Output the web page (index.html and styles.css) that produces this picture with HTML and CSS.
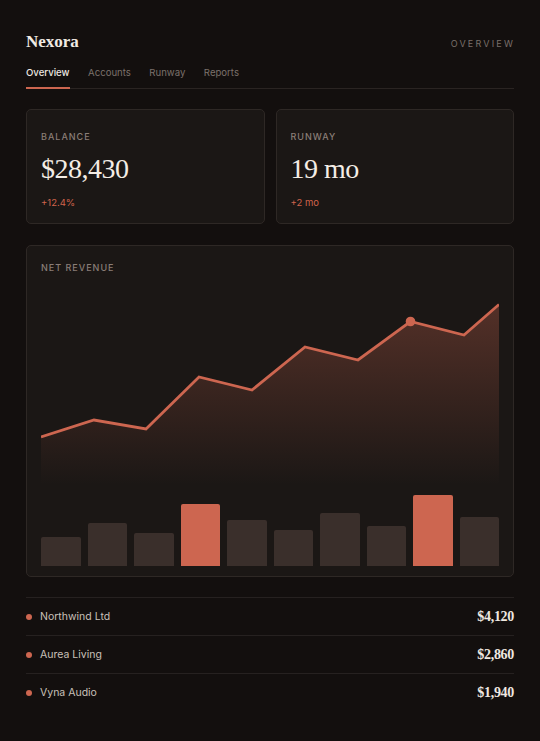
FILE: index.html
```html
<!DOCTYPE html>
<html lang="en">
<head>
    <meta charset="UTF-8">
    <meta name="viewport" content="width=device-width, initial-scale=1.0">
    <title>Nexora</title>
    <link rel="stylesheet" href="styles.css">
</head>
<body>
<div class="page">
    <header class="top">
        <div class="brand">Nexora</div>
        <div class="section-name">OVERVIEW</div>
    </header>

    <nav class="tabs">
        <a class="tab active">Overview</a>
        <a class="tab">Accounts</a>
        <a class="tab">Runway</a>
        <a class="tab">Reports</a>
    </nav>

    <div class="stats">
        <div class="card stat">
            <div class="label">BALANCE</div>
            <div class="value">$28,430</div>
            <div class="delta">+12.4%</div>
        </div>
        <div class="card stat">
            <div class="label">RUNWAY</div>
            <div class="value">19 mo</div>
            <div class="delta">+2 mo</div>
        </div>
    </div>

    <div class="card chart">
        <div class="label">NET REVENUE</div>
        <svg class="line-chart" viewBox="0 0 458 205" width="458" height="205">
            <defs>
                <linearGradient id="areaFill" gradientUnits="userSpaceOnUse" x1="0" y1="24" x2="0" y2="205">
                    <stop offset="0" stop-color="#cd6650" stop-opacity="0.32"/>
                    <stop offset="1" stop-color="#cd6650" stop-opacity="0"/>
                </linearGradient>
            </defs>
            <path d="M0,157 L53,140 L105,149 L158,97 L211,110 L264,67 L317,80 L369.5,41.5 L423,55 L458,24.5 L458,205 L0,205 Z" fill="url(#areaFill)"/>
            <polyline points="0,157 53,140 105,149 158,97 211,110 264,67 317,80 369.5,41.5 423,55 458,24.5" fill="none" stroke="#cd6650" stroke-width="2.8"/>
            <circle cx="369.5" cy="41.5" r="4.8" fill="#cd6650"/>
        </svg>
        <div class="bars">
            <div class="bar" style="height: 29px"></div>
            <div class="bar" style="height: 43px"></div>
            <div class="bar" style="height: 33px"></div>
            <div class="bar hot" style="height: 62px"></div>
            <div class="bar" style="height: 46px"></div>
            <div class="bar" style="height: 36px"></div>
            <div class="bar" style="height: 53px"></div>
            <div class="bar" style="height: 40px"></div>
            <div class="bar hot" style="height: 71px"></div>
            <div class="bar" style="height: 49px"></div>
        </div>
    </div>

    <ul class="clients">
        <li class="client">
            <span class="dot"></span>
            <span class="client-name">Northwind Ltd</span>
            <span class="amount">$4,120</span>
        </li>
        <li class="client">
            <span class="dot"></span>
            <span class="client-name">Aurea Living</span>
            <span class="amount">$2,860</span>
        </li>
        <li class="client">
            <span class="dot"></span>
            <span class="client-name">Vyna Audio</span>
            <span class="amount">$1,940</span>
        </li>
    </ul>
</div>
</body>
</html>
```

FILE: styles.css
```css
body {
    margin: 0;
    background-color: #130f0e;
    color: #ece6e0;
    font-family: Inter, "Noto Sans", sans-serif;
}

.page {
    padding: 32px 26px 30px;
}

.top {
    display: flex;
    justify-content: space-between;
    align-items: baseline;
}
.brand {
    font-family: "Liberation Serif", serif;
    font-weight: bold;
    font-size: 17px;
    line-height: 20px;
    color: #f1ebe4;
}
.section-name {
    font-size: 9px;
    letter-spacing: 2.2px;
    margin-right: -1px;
    color: #7a706a;
}

.tabs {
    display: flex;
    gap: 18.5px;
    margin-top: 15px;
    border-bottom: 1px solid #2a2422;
}
.tab {
    font-size: 9.6px;
    line-height: 12px;
    color: #7b716b;
    padding-bottom: 8px;
    border-bottom: 2px solid transparent;
    margin-bottom: -1px;
}
.tab.active {
    color: #eee8e2;
    font-weight: 500;
    border-bottom-color: #cd6650;
}

.card {
    background-color: #1b1715;
    border: 1px solid #2e2825;
    border-radius: 5px;
}

.stats {
    display: grid;
    grid-template-columns: 1fr 1fr;
    gap: 11px;
    margin-top: 20px;
}
.stat {
    padding: 21px 14px 14px;
}
.label {
    font-size: 9px;
    line-height: 11px;
    letter-spacing: 1px;
    font-weight: 500;
    color: #8a7e77;
}
.value {
    font-family: "Liberation Serif", serif;
    font-size: 28px;
    line-height: 32px;
    letter-spacing: -0.5px;
    margin-top: 11px;
    color: #f4ede5;
}
.delta {
    font-size: 9.5px;
    line-height: 12px;
    margin-top: 12px;
    color: #d0644c;
}

.chart {
    margin-top: 21px;
    padding: 16px 14px 10px;
}
.line-chart {
    display: block;
    width: 100%;
    margin-top: 7px;
}
.bars {
    display: flex;
    align-items: flex-end;
    gap: 7px;
    height: 71px;
    margin-top: 10px;
}
.bar {
    flex: 1;
    background-color: #3a2f2b;
    border-radius: 2px 2px 0 0;
}
.bar.hot {
    background-color: #cd6650;
}

.clients {
    list-style: none;
    margin: 20px 0 0;
    padding: 0;
}
.client {
    display: flex;
    align-items: center;
    height: 37px;
    border-top: 1px solid #262120;
}
.dot {
    width: 6px;
    height: 6px;
    border-radius: 50%;
    background-color: #cd6650;
    margin-right: 8px;
}
.client-name {
    font-size: 10.5px;
    color: #c9c0b9;
}
.amount {
    margin-left: auto;
    font-family: "Liberation Serif", serif;
    font-weight: bold;
    font-size: 14px;
    letter-spacing: -0.3px;
    color: #efe8e0;
}
```
